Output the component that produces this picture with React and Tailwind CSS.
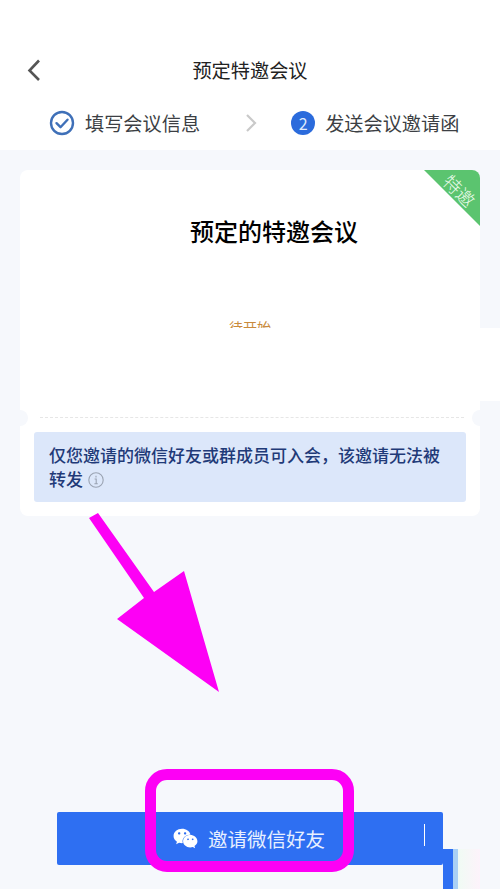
import { FaWeixin } from 'react-icons/fa';

const cjk = 'font-["Noto_Sans_CJK_SC","Noto_Sans",sans-serif]';

function CheckBadge() {
  return (
    <svg width="26" height="26" viewBox="0 0 26 26" fill="none">
      <circle cx="13" cy="13" r="11" stroke="#3f70b8" strokeWidth="2.4" />
      <path d="M7.5 13.2l4 4 7-7.5" stroke="#3f70b8" strokeWidth="2.4" strokeLinecap="round" strokeLinejoin="round" />
    </svg>
  );
}

function Header() {
  return (
    <header className="h-[150px] shrink-0 bg-white pt-[57px] text-[#3c3f44]">
      <div className="relative flex h-[26px] items-center justify-center text-[19.2px] leading-[26px] text-[#222]">
        <svg className="absolute left-[26px] top-[1px]" width="16" height="24" viewBox="0 0 16 24" fill="none">
          <path d="M13 2.5L3.5 12.5l9.5 9.5" stroke="#555" strokeWidth="2.6" />
        </svg>
        预定特邀会议
      </div>
      <div className="mt-[27px] flex h-[26px] items-center pl-[49px] text-[19.2px] leading-[26px]">
        <CheckBadge />
        <span className="ml-[10px]">填写会议信息</span>
        <svg className="ml-[44px]" width="14" height="20" viewBox="0 0 14 20" fill="none">
          <path d="M3 2l8 8-8 8" stroke="#c9c9c9" strokeWidth="2.2" />
        </svg>
        <span className="ml-[33px] flex h-6 w-6 items-center justify-center rounded-full bg-[#2b6bdc] text-[16px] text-[#dfe9fb]">2</span>
        <span className="ml-[10px]">发送会议邀请函</span>
      </div>
    </header>
  );
}

function Card() {
  return (
    <section className="relative mx-5 mt-5 h-[346px] overflow-hidden rounded-lg bg-white">
      <div className="absolute right-0 top-0 h-[56px] w-[56px] bg-[#5bc46f] [clip-path:polygon(0_0,100%_0,100%_100%)]" />
      <span className="absolute right-[2px] top-[10px] h-5 w-9 rotate-45 text-center text-[18px] font-light leading-5 text-[#eafbea]">特邀</span>
      <div className="h-[247px]">
        <h1 className="pl-[48px] pt-[45px] text-center text-[24px] font-medium leading-8 text-black">预定的特邀会议</h1>
        <p className="mt-[70px] text-center text-[14px] leading-5 text-[#c98a3c]">待开始</p>
      </div>
      <div className="relative ml-5 mr-4 border-t border-dashed border-[#e6e6e6]">
        <span className="absolute -left-[28px] -top-2 h-4 w-4 rounded-full bg-[#f6f8fc]" />
        <span className="absolute -right-[24px] -top-2 h-4 w-4 rounded-full bg-[#f6f8fc]" />
      </div>
      <div className="mx-[14px] mt-[14px] h-[70px] rounded-[3px] bg-[#dce7fa] px-[15px] py-[11px] text-[17px] font-medium leading-6 text-[#1f3a78]">
        仅您邀请的微信好友或群成员可入会，该邀请无法被转发
        <svg className="ml-[5px] inline-block align-[-2px]" width="16" height="16" viewBox="0 0 16 16" fill="none">
          <circle cx="8" cy="8" r="7.2" stroke="#9aa3b2" strokeWidth="1.1" />
          <path d="M8 3.8v1.6M6.6 7h1.6v4.6M6.4 11.8h3.4" stroke="#9aa3b2" strokeWidth="1.1" />
        </svg>
      </div>
    </section>
  );
}

function Annotations() {
  return (
    <>
      <div className="absolute left-5 top-[328px] h-[73px] w-[480px] bg-white" />
      <svg className="absolute left-0 top-0" width="500" height="889" viewBox="0 0 500 889">
        <polygon
          points="89,518 98,513 154,592 184,571 219,692 117,619 144,598"
          fill="#fd00f5"
        />
      </svg>
      <div className="absolute left-[145px] top-[769px] h-[103px] w-[209px] rounded-[22px] border-[11px] border-[#fd00f5]" />
      <div className="absolute left-[424px] top-[824px] h-[22px] w-px bg-white" />
      <div className="absolute left-[443px] top-[849px] flex h-10 w-[37px]">
        <div className="h-full w-[10px] bg-[#2e6ff2]" />
        <div className="h-full w-[5px] bg-[#a9d0f5]" />
        <div className="h-full flex-1 bg-gradient-to-r from-[#f0fbf4] to-[#fdf3fb]" />
      </div>
    </>
  );
}

export default function App() {
  return (
    <div className={`relative flex h-[889px] w-[500px] flex-col overflow-hidden bg-[#f6f8fc] ${cjk}`}>
      <Header />
      <Card />
      <div className="mx-[57px] mt-[296px] flex h-[53px] items-center rounded-[2px] bg-[#2e6ff2] pl-[116px] text-[19.5px] text-[#e8f0ff]">
        <FaWeixin className="h-[25px] w-[25px] text-white" />
        <span className="ml-[10px]">邀请微信好友</span>
      </div>
      <Annotations />
    </div>
  );
}
